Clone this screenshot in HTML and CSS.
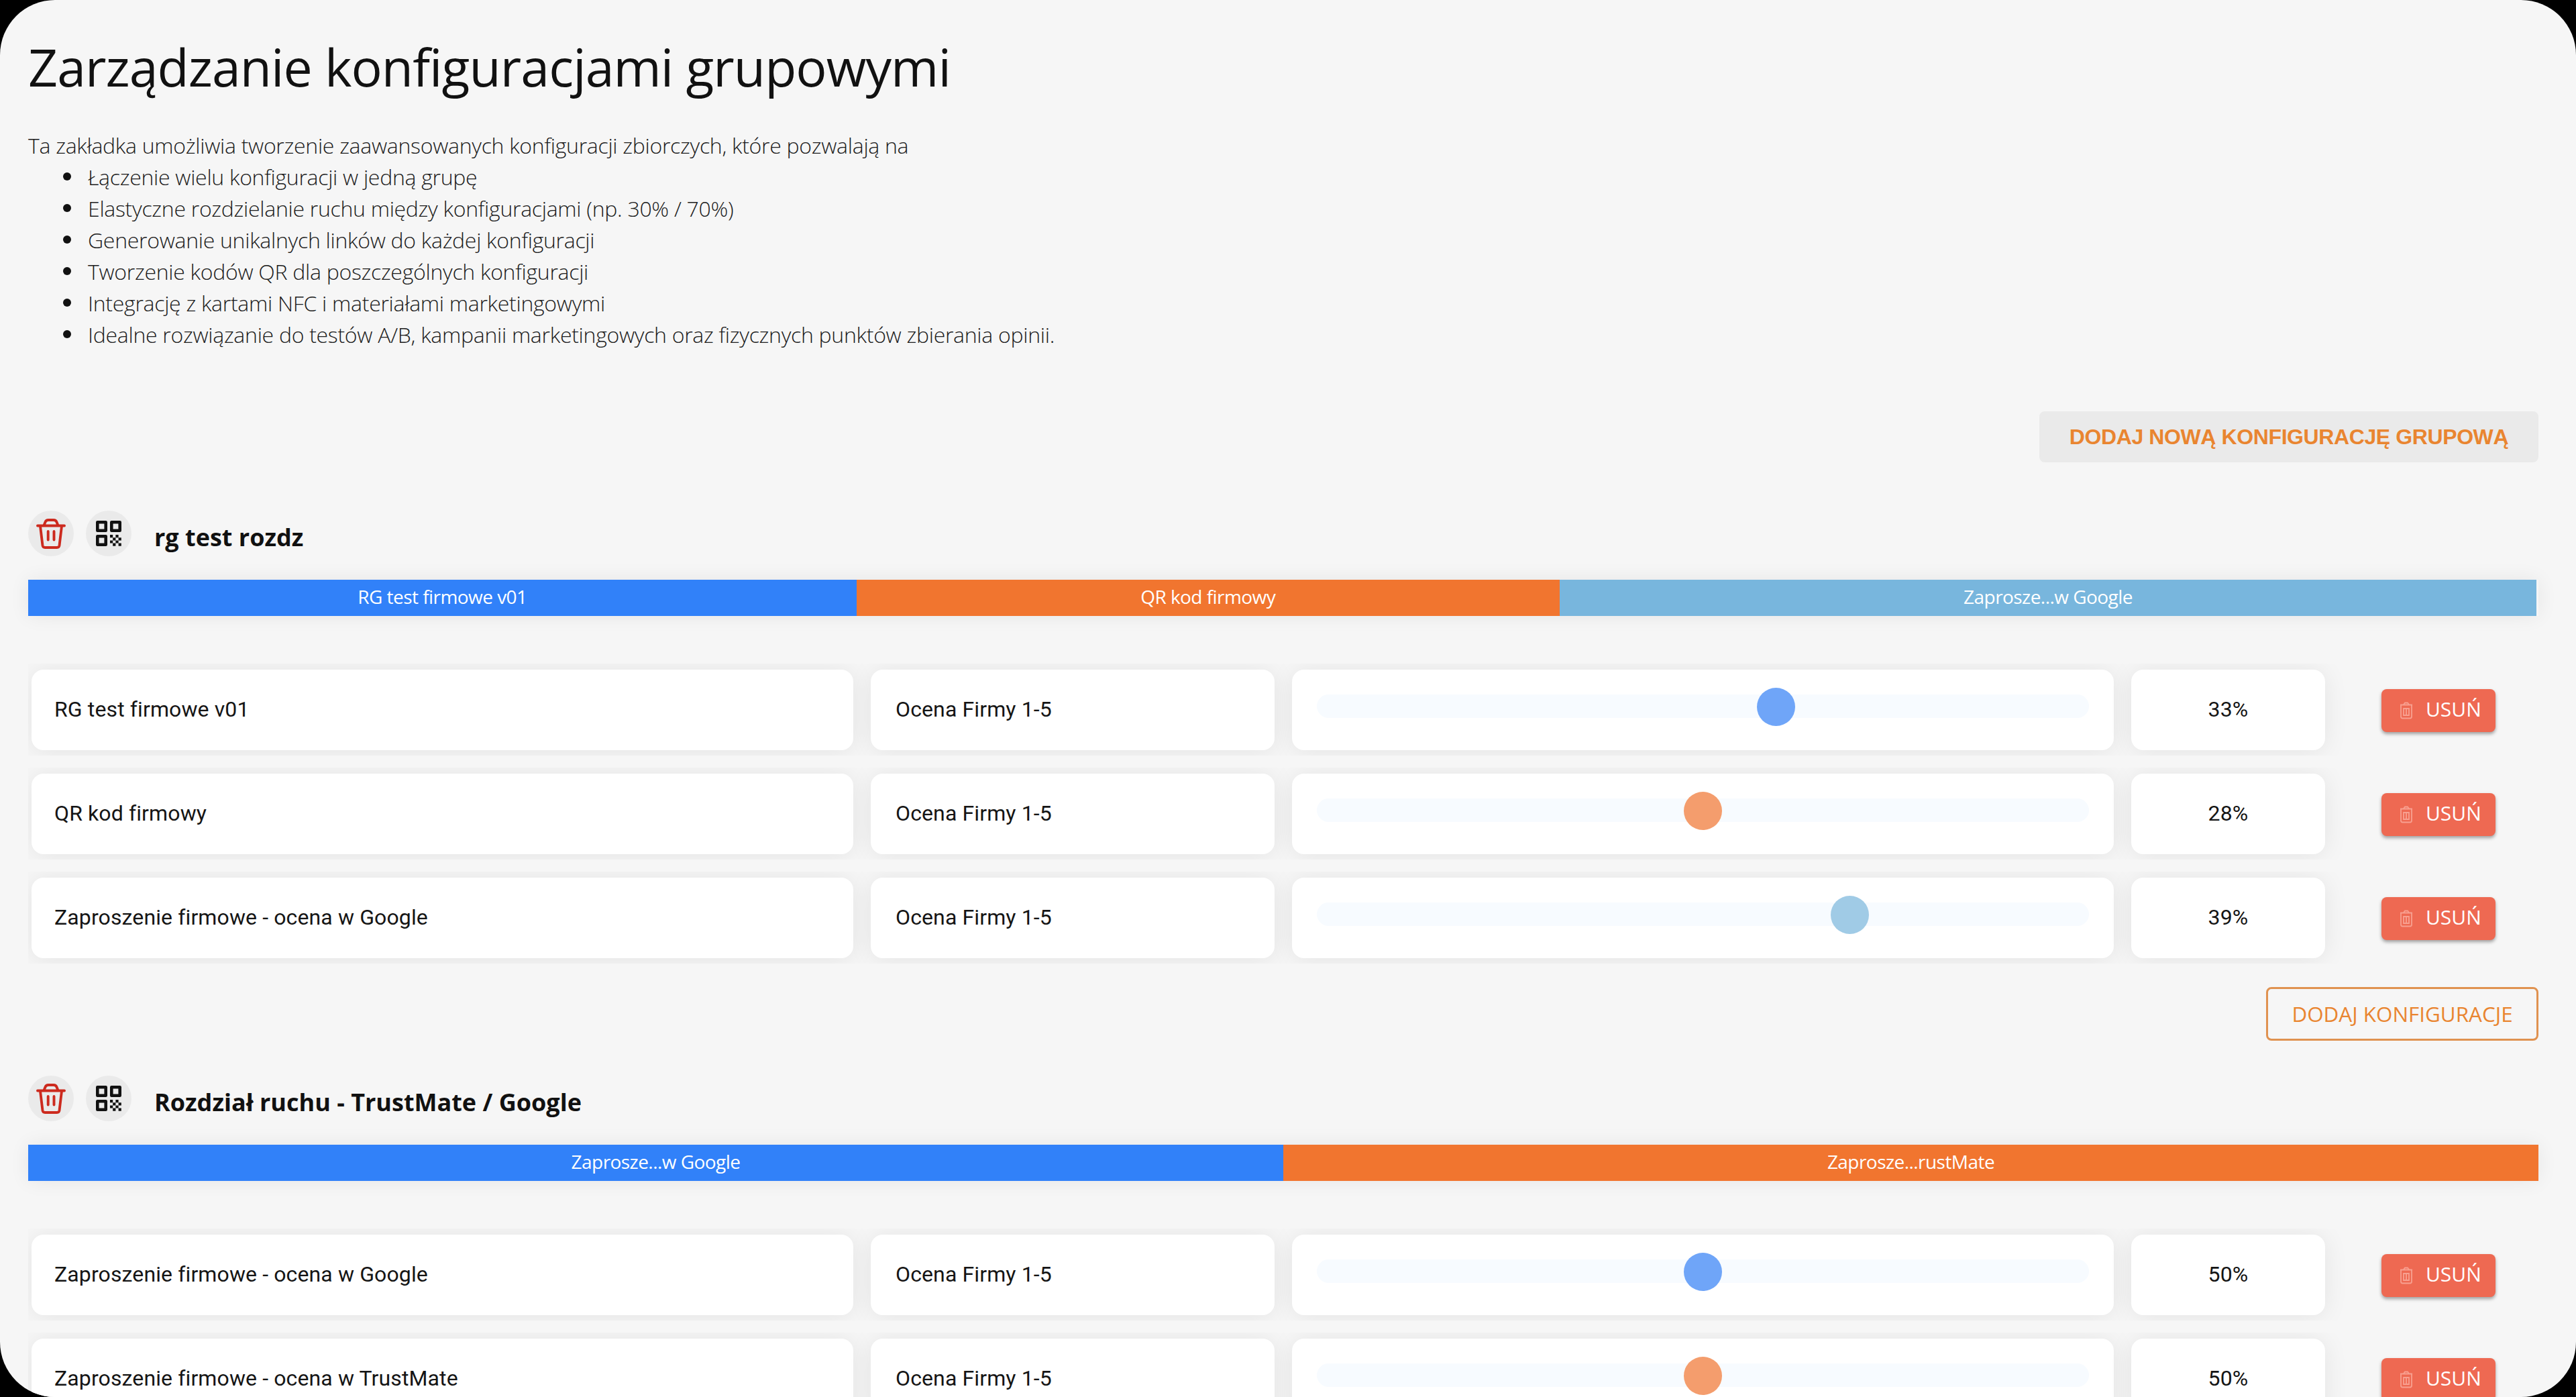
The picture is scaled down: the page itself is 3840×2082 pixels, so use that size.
FILE: index.html
```
<!DOCTYPE html>
<html lang="pl">
<head>
<meta charset="utf-8">
<title>Zarządzanie konfiguracjami grupowymi</title>
<link rel="stylesheet" href="styles.css">
</head>
<body>
<svg class="sprite" aria-hidden="true">
  <symbol id="trash" viewBox="0 0 46 46">
    <path d="M3 11.500H43M7 12L10.500 41Q11 44 14 44H32Q35 44 35.500 41L39 12M12.500 11L14.500 6Q15.800 3 19 3H27Q30.200 3 31.500 6L33.500 11M18.700 20V32.500M27.500 20V32.500" fill="none" stroke="currentColor" stroke-width="3.900" stroke-linecap="round"/>
  </symbol>
  <symbol id="qr" viewBox="0 0 40 40">
    <path d="M3.300 3.300H15.700V15.700H3.300ZM24.300 3.300H36.700V15.700H24.300ZM3.300 24.300H15.700V36.700H3.300Z" fill="none" stroke="currentColor" stroke-width="4.600" stroke-linejoin="round"/>
    <path d="M22 22h4.200v4.200h-4.200zM30.400 22h4.200v4.200h-4.200zM26.200 26.200h4.200v4.200h-4.200zM34.600 26.200h4.200v4.200h-4.200zM22 30.400h4.200v4.200h-4.200zM30.400 30.400h4.200v4.200h-4.200zM26.200 34.600h4.200v4.200h-4.200zM34.600 34.600h4.200v4.200h-4.200z" fill="currentColor"/>
  </symbol>
  <symbol id="bin" viewBox="0 0 20 26">
    <path d="M1 4.500H19M2 5V22Q2 24.500 4.500 24.500H15.500Q18 24.500 18 22V5M6 4L8 1.500H12L14 4M6 10H14V20H6ZM10 10V20" fill="none" stroke="currentColor" stroke-width="1.800"/>
  </symbol>
</svg>
<main class="page">
  <h1 class="title">Zarządzanie konfiguracjami grupowymi</h1>
  <p class="intro">Ta zakładka umożliwia tworzenie zaawansowanych konfiguracji zbiorczych, które pozwalają na</p>
  <ul class="features">
    <li>Łączenie wielu konfiguracji w jedną grupę</li>
    <li>Elastyczne rozdzielanie ruchu między konfiguracjami (np. 30% / 70%)</li>
    <li>Generowanie unikalnych linków do każdej konfiguracji</li>
    <li>Tworzenie kodów QR dla poszczególnych konfiguracji</li>
    <li>Integrację z kartami NFC i materiałami marketingowymi</li>
    <li>Idealne rozwiązanie do testów A/B, kampanii marketingowych oraz fizycznych punktów zbierania opinii.</li>
  </ul>
  <button class="add-group">DODAJ NOWĄ KONFIGURACJĘ GRUPOWĄ</button>

  <section class="group">
    <header class="group-head">
      <button class="round danger"><svg class="i-trash"><use href="#trash"/></svg></button>
      <button class="round"><svg class="i-qr"><use href="#qr"/></svg></button>
      <h2>rg test rozdz</h2>
    </header>
    <div class="split">
      <div class="blue" style="width:33%">RG test firmowe v01</div>
      <div class="orange" style="width:28%">QR kod firmowy</div>
      <div class="sky" style="width:38.93%">Zaprosze...w Google</div>
    </div>
    <div class="rows">
      <div class="row">
        <div class="card">RG test firmowe v01</div><div class="card">Ocena Firmy 1-5</div>
        <div class="card"><div class="track"><i class="thumb blue" style="--at:.6"></i></div></div>
        <div class="card pct">33%</div><button class="remove"><svg class="i-bin"><use href="#bin"/></svg><span>USUŃ</span></button>
      </div>
      <div class="row">
        <div class="card">QR kod firmowy</div><div class="card">Ocena Firmy 1-5</div>
        <div class="card"><div class="track"><i class="thumb orange" style="--at:.5"></i></div></div>
        <div class="card pct">28%</div><button class="remove"><svg class="i-bin"><use href="#bin"/></svg><span>USUŃ</span></button>
      </div>
      <div class="row">
        <div class="card">Zaproszenie firmowe - ocena w Google</div><div class="card">Ocena Firmy 1-5</div>
        <div class="card"><div class="track"><i class="thumb sky" style="--at:.7"></i></div></div>
        <div class="card pct">39%</div><button class="remove"><svg class="i-bin"><use href="#bin"/></svg><span>USUŃ</span></button>
      </div>
    </div>
    <button class="add-config">DODAJ KONFIGURACJE</button>
  </section>

  <section class="group">
    <header class="group-head">
      <button class="round danger"><svg class="i-trash"><use href="#trash"/></svg></button>
      <button class="round"><svg class="i-qr"><use href="#qr"/></svg></button>
      <h2>Rozdział ruchu - TrustMate / Google</h2>
    </header>
    <div class="split">
      <div class="blue" style="width:50%">Zaprosze...w Google</div>
      <div class="orange" style="width:50%">Zaprosze...rustMate</div>
    </div>
    <div class="rows">
      <div class="row">
        <div class="card">Zaproszenie firmowe - ocena w Google</div><div class="card">Ocena Firmy 1-5</div>
        <div class="card"><div class="track"><i class="thumb blue" style="--at:.5"></i></div></div>
        <div class="card pct">50%</div><button class="remove"><svg class="i-bin"><use href="#bin"/></svg><span>USUŃ</span></button>
      </div>
      <div class="row">
        <div class="card">Zaproszenie firmowe - ocena w TrustMate</div><div class="card">Ocena Firmy 1-5</div>
        <div class="card"><div class="track"><i class="thumb orange" style="--at:.5"></i></div></div>
        <div class="card pct">50%</div><button class="remove"><svg class="i-bin"><use href="#bin"/></svg><span>USUŃ</span></button>
      </div>
    </div>
  </section>
</main>
</body>
</html>
```
FILE: styles.css
```
* { box-sizing: border-box; }
html { background: #000; overflow: hidden; }
body { margin: 0; background: #000; color: #111; font-family: "Open Sans", sans-serif; }
button { border: 0; padding: 0; margin: 0; font: inherit; }
.sprite { display: none; }

.page {
  display: flex;
  flex-direction: column;
  width: 3840px;
  height: 2082px;
  padding: 46px 56px 0 42px;
  overflow: hidden;
  border-radius: 82px;
  background: #f6f6f6;
}
.title { margin: 0; font-size: 77px; font-weight: 400; line-height: 108px; letter-spacing: -.93px; white-space: nowrap; }
.intro, .features {
  font-size: 32px;
  font-weight: 300;
  line-height: 47px;
  letter-spacing: -.29px;
  color: #1c1c1c;
}
.intro { margin: 39px 0 0; }
.features { margin: 0; padding: 0 0 0 89px; list-style: none; }
.features li { position: relative; }
.features li::before {
  content: "";
  position: absolute;
  left: -37px;
  top: 17px;
  width: 12px;
  height: 12px;
  border-radius: 50%;
  background: #111;
}

.add-group {
  align-self: flex-end;
  width: 744px;
  height: 76px;
  margin-top: 91px;
  flex: none;
  border-radius: 8px;
  background: #eaeaea;
  color: #e98530;
  font: bold 32px/75px "Liberation Sans", sans-serif;
  letter-spacing: -.4px;
  white-space: nowrap;
}

.group { display: flex; flex-direction: column; flex: none; padding-top: 72px; }
.group + .group { padding-top: 52px; }
.group-head { display: flex; height: 68px; gap: 18px; align-items: flex-start; }
.round {
  display: flex;
  align-items: center;
  justify-content: center;
  width: 68px;
  height: 68px;
  border-radius: 50%;
  background: #eaeaea;
  color: #111;
}
.danger { color: #cc2a1e; }
.i-trash { width: 46px; height: 46px; }
.i-qr { width: 40px; height: 40px; }
.group-head h2 { margin: 14px 0 0 16px; font-size: 36px; font-weight: 700; line-height: 52px; white-space: nowrap; }

.split {
  display: flex;
  height: 54px;
  margin-top: 35px;
  box-shadow: 0 0 30px rgba(0, 0, 0, .07);
}
.split div {
  color: #fff;
  font-size: 28px;
  font-weight: 500;
  line-height: 51px;
  letter-spacing: -.55px;
  text-align: center;
}
.blue { background: #3181f9; }
.orange { background: #f1752f; }
.sky { background: #78b6dd; }

.rows { display: flex; flex-direction: column; gap: 18px; margin-top: 71px; }
.row {
  display: grid;
  grid-template-columns: 1225px 602px 1225px 289px 170px;
  column-gap: 26px;
  align-items: center;
  height: 137px;
  padding: 0 5px;
  overflow: hidden;
}
.card {
  height: 120px;
  padding: 0 37px;
  border-radius: 18px;
  background: #fff;
  box-shadow: 0 2px 36px rgba(0, 0, 0, .08);
  font: 400 32px/118px Roboto, sans-serif;
  letter-spacing: .12px;
  color: #151515;
  white-space: nowrap;
}
.card:first-child { padding-left: 34px; }
.card.pct { padding: 0; text-align: center; }
.track { position: relative; height: 35px; margin-top: 37px; border-radius: 18px; background: #f7fbff; }
.thumb {
  position: absolute;
  top: -10px;
  left: calc((100% - 57px) * var(--at));
  width: 57px;
  height: 57px;
  border-radius: 50%;
}
.thumb.blue { background: #6fa5f8; }
.thumb.orange { background: #f49d6d; }
.thumb.sky { background: #a0cbe6; }
.remove {
  display: flex;
  align-items: center;
  width: 170px;
  height: 64px;
  margin: 3px 0 0 58px;
  padding-left: 27px;
  gap: 19px;
  border-radius: 8px;
  background: #ee6952;
  color: #fff;
  font-size: 30px;
  line-height: 60px;
  box-shadow: 0 3px 5px rgba(0, 0, 0, .35);
}
.remove span { padding-bottom: 4px; }
.i-bin { width: 20px; height: 26px; color: #f8a090; }
.add-config {
  align-self: flex-end;
  width: 406px;
  height: 80px;
  margin-top: 35px;
  border: 3px solid #e09250;
  border-radius: 8px;
  background: transparent;
  color: #e98530;
  font-size: 31.400px;
  line-height: 72px;
}
```
